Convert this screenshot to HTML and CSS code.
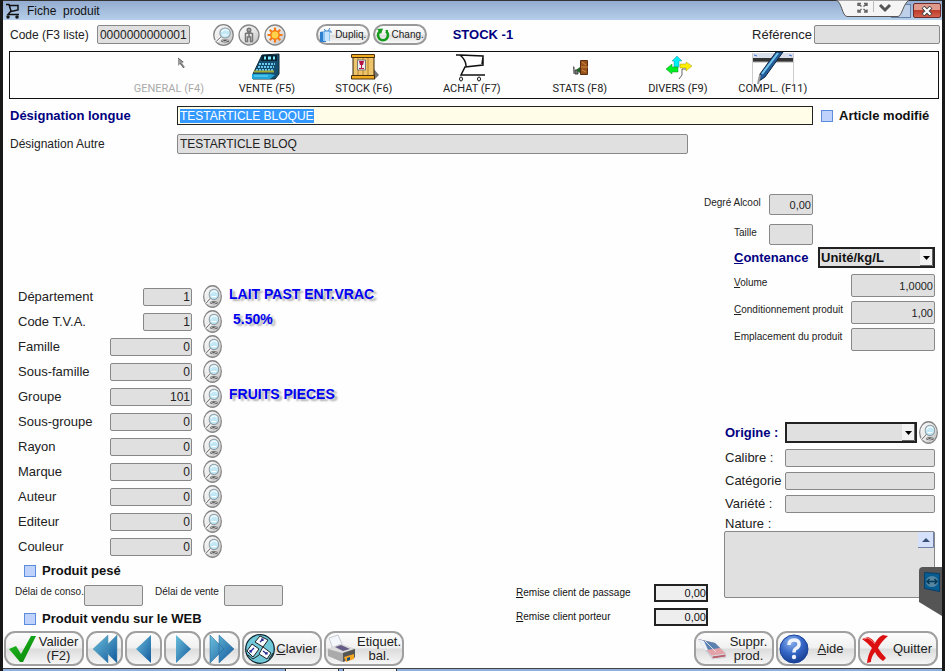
FILE: index.html
```
<!DOCTYPE html>
<html lang="fr">
<head>
<meta charset="utf-8">
<title>Fiche produit</title>
<link rel="stylesheet" href="styles.css">
</head>
<body>
<svg class="defs" aria-hidden="true">
  <defs>
    <linearGradient id="metal" x1="0" y1="0" x2="1" y2="1"><stop offset="0" stop-color="#fff"/><stop offset=".55" stop-color="#e3e3e3"/><stop offset="1" stop-color="#bbb"/></linearGradient>
    <linearGradient id="arrow" x1="0" y1="0" x2="1" y2="1"><stop offset="0" stop-color="#6cc0dc"/><stop offset="1" stop-color="#12589c"/></linearGradient>
    <radialGradient id="ball" cx=".4" cy=".25" r=".8"><stop offset="0" stop-color="#8db4ee"/><stop offset=".5" stop-color="#3768c8"/><stop offset="1" stop-color="#153a8c"/></radialGradient>
    <linearGradient id="tick" x1="0" y1="0" x2="1" y2="1"><stop offset="0" stop-color="#22c022"/><stop offset="1" stop-color="#068006"/></linearGradient>
    <symbol id="lens" viewBox="0 0 20 22" preserveAspectRatio="none">
      <ellipse cx="10" cy="11" rx="9.3" ry="10.3" fill="url(#metal)" stroke="#858585" stroke-width="1.3"/>
      <path d="M3 17.500L8 12.500" stroke="#fff" stroke-width="3"/><path d="M3 17.500L8 12.500" stroke="#777" stroke-width="1"/>
      <ellipse cx="11.500" cy="17" rx="4" ry="1.400" fill="#555"/><path d="M8 16l3 2 4-2" stroke="#bbb" fill="none"/>
      <circle cx="11.500" cy="9" r="5" fill="#c2e8f6" stroke="#8f9ca3"/>
      <path d="M8 8q3-4 7-1M9 11h5" stroke="#fff" fill="none"/>
    </symbol>
  </defs>
</svg>
<div class="window">
  <header class="titlebar">
    <svg width="16" height="16" viewBox="0 0 16 16" fill="none" stroke="#111" stroke-width="1.500"><path d="M1 1.500h3L6 8 3 11.500h11M4 2.500h9v4.500L6 8.500"/><circle cx="3" cy="14" r="1"/><circle cx="12" cy="14" r="1"/></svg>
    <h1>Fiche&nbsp; produit</h1>
    <button class="min" aria-label="Agrandir"></button>
    <button class="close" aria-label="Fermer"><svg width="12" height="10" viewBox="0 0 12 10"><path d="M2 1l8 8M10 1L2 9" stroke="#444" stroke-width="4"/><path d="M2.500 1.500l7 7M9.500 1.500l-7 7" stroke="#fff" stroke-width="2.200"/></svg></button>
  </header>

  <div class="remote-bar">
    <svg width="74" height="18" viewBox="0 0 74 18"><path d="M0 0C6 2 6 16 11 16.500H62C66 16 67 4 73 0Z" fill="#f5f5f5" stroke="#555"/>
      <path d="M37.500 0v12" stroke="#bbb"/><path d="M44 5l5 5 5-5" fill="none" stroke="#555" stroke-width="3"/>
      <g fill="none" stroke="#666" stroke-width="1.500"><path d="M22 6V3.500h3M28 3.500h3V6M31 9.500V12h-3M25 12h-3V9.500M22 3.500l3.500 3M31 3.500l-3.500 3M22 12l3.500-3M31 12l-3.500-3"/></g></svg>
  </div>

  <div class="code-row">
    <label for="code">Code (F3 liste)</label>
    <input id="code" class="field code" value="0000000000001">
    <div class="round-tools">
      <button aria-label="Rechercher"><svg width="21" height="22"><use href="#lens"/></svg></button>
      <button aria-label="Client"><svg width="22" height="22" viewBox="0 0 22 22"><circle cx="11" cy="11" r="10" fill="url(#metal)" stroke="#858585" stroke-width="1.300"/><g stroke="#777" fill="none" stroke-width="1.500"><circle cx="11" cy="6" r="1.800" fill="#aaa"/><path d="M7.500 17V9.500l3.500-1 3.500 1V17M11 9v4M9.500 18v-5h3v5M7 17.500h3M12 17.500h3"/></g></svg></button>
      <button aria-label="Options"><svg width="22" height="22" viewBox="0 0 22 22"><circle cx="11" cy="11" r="10" fill="url(#metal)" stroke="#858585" stroke-width="1.300"/><path d="M11 3.500v15M3.500 11h15M5.700 5.700l10.600 10.600M16.300 5.700L5.700 16.300" stroke="#f57a12" stroke-width="2.200"/><circle cx="11" cy="11" r="4.200" fill="#ffd24a" stroke="#f57a12" stroke-width="1.500"/></svg></button>
    </div>
    <div class="pills">
      <button class="pill"><svg width="14" height="14" viewBox="0 0 14 14"><path d="M1 4l6-1v11H1z" fill="#2f7fd0"/><path d="M4 3h7v10H4z" fill="#8cc4f2"/><path d="M6 3h4v10H6z" fill="#c7e4fb"/><path d="M5 1l2 2M11 0l-2 3M5 3h7v2" stroke="#3b88d4" fill="none"/></svg>Dupliq.</button>
      <button class="pill"><svg width="14" height="14" viewBox="0 0 14 14"><path d="M4 3.200A5 5 0 1 0 10 3.200" fill="none" stroke="#159c1c" stroke-width="2.600"/><path d="M1 1l6-.5-2 5.500z" fill="#159c1c"/><path d="M9 2l3 0v3z" fill="#159c1c"/></svg>Chang.</button>
    </div>
    <strong class="stock">STOCK -1</strong>
    <label for="ref" class="ref-label">Référence</label>
    <input id="ref" class="field ref">
  </div>

  <nav class="tabs">
    <button class="tab first" disabled><svg width="34" height="30" viewBox="0 0 34 30"><path d="M26 6l6 4-2 1 3 4-2 1-3-4-2 2z" fill="#999"/><path d="M26 6l5 4M28 11l4 5" stroke="#666"/></svg>GENERAL (F4)</button>
    <button class="tab"><svg width="34" height="30" viewBox="0 0 34 30"><path d="M12 3L29 2V22L25 27H3V22Z" fill="#164e70" stroke="#112b3a"/><path d="M12 3H27V9H11Z" fill="#082332"/><path d="M14 6h2m2 0h3m2 0h2" stroke="#7eeaff" stroke-width="3"/><path d="M9 12h16M8 15h16M6 18h17" stroke="#68c8f0" stroke-width="2" stroke-dasharray="2 1"/><path d="M4 19.500h20" stroke="#a4aa32" stroke-width="2"/><path d="M2 22h18l5 1-5 4H2z" fill="#21a4d7"/><path d="M4 24h14" stroke="#73dfff"/></svg>VENTE (F5)</button>
    <button class="tab"><svg width="34" height="30" viewBox="0 0 34 30"><path d="M26 16l6 7-5 5z" fill="#777"/><path d="M6 3h21v23H6z" fill="#edc46b" stroke="#332208"/><path d="M11 6v18M16 6v18M21 6v18" stroke="#b98228"/><path d="M4.500 2.500h23v3h-23zM4.500 23.500h23v3.500h-23z" fill="#f0aa20" stroke="#49300a"/><path d="M10.500 8h8v10h-8z" fill="#eee" stroke="#777"/><path d="M12 9h5l-1 4h-3zM14 13h1v3h2v1h-5v-1h2z" fill="#b61243"/></svg>STOCK (F6)</button>
    <button class="tab"><svg width="34" height="30" viewBox="0 0 34 30" fill="none" stroke="#111" stroke-width="1.500"><path d="M1 3h4l23 1v9l-18 2L6 23h24M5 3q6 5 6 11M28 5L27 12"/><ellipse cx="6" cy="27" rx="1.500" ry="2" stroke-width="1"/><ellipse cx="24" cy="27" rx="1.500" ry="2" stroke-width="1"/></svg>ACHAT (F7)</button>
    <button class="tab"><svg width="34" height="30" viewBox="0 0 34 30"><path d="M17.500 8.500h7v14h-7z" fill="#99541b" stroke="#5a2e10"/><path d="M18 15h7M19 10l4 3M19 18l4 2" stroke="#d08a3c"/><path d="M10 15h1v7M12 18h3v4h-3z" fill="#777" stroke="#444"/><path d="M13 18l4-3v6z" fill="#226326"/></svg>STATS (F8)</button>
    <button class="tab"><svg width="34" height="30" viewBox="0 0 34 30"><path d="M16 4l5 5h-3v6h-5V9h-2z" fill="#00eff5" stroke="#278c9a" stroke-width=".5"/><path d="M5 17l6-5v3h6v5h-6v2z" fill="#00ef22" stroke="#178827" stroke-width=".5"/><path d="M31 14l-6-4v2h-6v4h6v3z" fill="#ffef00" stroke="#a0941c" stroke-width=".5"/><path d="M21 17h4M21 17v6l-3 4" stroke="#666" fill="none"/></svg>DIVERS (F9)</button>
    <button class="tab wide"><svg width="42" height="40" viewBox="0 0 42 40"><path d="M.5 1v31M41.500 1v31" stroke="#ccc"/><path d="M1 1h40v5H1z" fill="#d9dfeb"/><path d="M1 6h40v4H1z" fill="#333"/><path d="M1 10h40" stroke="#aaa"/><path d="M2 3l3 1M37 3l3 1" stroke="#4475d0"/><path d="M24 0L8 22l-1 7 6-4L31 0z" fill="#235c98" stroke="#10253b"/><path d="M26 1L10 22" stroke="#75c6ef" stroke-width="2"/><path d="M8 23l-2 9" stroke="#999" stroke-width="2"/></svg>COMPL. (F11)</button>
  </nav>

  <div class="names">
    <label for="long" class="strong navy">Désignation longue</label>
    <input id="long" class="field long" value="TESTARTICLE BLOQUE">
    <label class="check"><input type="checkbox">Article modifié</label>
    <label for="other">Désignation Autre</label>
    <input id="other" class="field other" value="TESTARTICLE BLOQ">
  </div>

  <main class="body">
    <section class="left">
      <div class="class-row"><label for="f1">Département</label><input id="f1" class="field short" value="1"><button aria-label="Rechercher département"><svg><use href="#lens"/></svg></button><output>LAIT PAST ENT.VRAC</output></div>
      <div class="class-row"><label for="f2">Code T.V.A.</label><input id="f2" class="field short" value="1"><button aria-label="Rechercher TVA"><svg><use href="#lens"/></svg></button><output class="rate">5.50%</output></div>
      <div class="class-row"><label for="f3">Famille</label><input id="f3" class="field" value="0"><button aria-label="Rechercher famille"><svg><use href="#lens"/></svg></button></div>
      <div class="class-row"><label for="f4">Sous-famille</label><input id="f4" class="field" value="0"><button aria-label="Rechercher sous-famille"><svg><use href="#lens"/></svg></button></div>
      <div class="class-row"><label for="f5">Groupe</label><input id="f5" class="field" value="101"><button aria-label="Rechercher groupe"><svg><use href="#lens"/></svg></button><output>FRUITS PIECES</output></div>
      <div class="class-row"><label for="f6">Sous-groupe</label><input id="f6" class="field" value="0"><button aria-label="Rechercher sous-groupe"><svg><use href="#lens"/></svg></button></div>
      <div class="class-row"><label for="f7">Rayon</label><input id="f7" class="field" value="0"><button aria-label="Rechercher rayon"><svg><use href="#lens"/></svg></button></div>
      <div class="class-row"><label for="f8">Marque</label><input id="f8" class="field" value="0"><button aria-label="Rechercher marque"><svg><use href="#lens"/></svg></button></div>
      <div class="class-row"><label for="f9">Auteur</label><input id="f9" class="field" value="0"><button aria-label="Rechercher auteur"><svg><use href="#lens"/></svg></button></div>
      <div class="class-row"><label for="f10">Editeur</label><input id="f10" class="field" value="0"><button aria-label="Rechercher éditeur"><svg><use href="#lens"/></svg></button></div>
      <div class="class-row"><label for="f11">Couleur</label><input id="f11" class="field" value="0"><button aria-label="Rechercher couleur"><svg><use href="#lens"/></svg></button></div>
      <div class="extras">
        <label class="check indent"><input type="checkbox">Produit pesé</label>
        <div class="delays">
          <label for="conso">Délai de conso.</label><input id="conso" class="field">
          <label for="vente">Délai de vente</label><input id="vente" class="field">
        </div>
        <label class="check indent"><input type="checkbox">Produit vendu sur le WEB</label>
      </div>
    </section>

    <section class="discounts">
      <label for="r1"><u>R</u>emise client de passage</label><input id="r1" value="0,00">
      <label for="r2"><u>R</u>emise client porteur</label><input id="r2" value="0,00">
    </section>

    <section class="right">
      <div class="sizes">
        <label for="deg">Degré Alcool</label><input id="deg" class="field" value="0,00">
        <label for="taille" class="inset">Taille</label><input id="taille" class="field">
      </div>
      <div class="content-row">
        <label for="cont" class="strong navy"><u>C</u>ontenance</label>
        <span class="drop"><select id="cont"><option>Unité/kg/L</option></select><svg width="13" height="17" viewBox="0 0 13 17"><path d="M0 0h13v17H0z" fill="#f2f2f2"/><path d="M12.500 0v16.500H0" fill="none" stroke="#666"/><path d="M3 7h7L6.500 11z" fill="#000"/></svg></span>
      </div>
      <div class="packing">
        <label for="vol"><u>V</u>olume</label><input id="vol" class="field" value="1,0000">
        <label for="pack"><u>C</u>onditionnement produit</label><input id="pack" class="field" value="1,00">
        <label for="place">Emplacement du produit</label><input id="place" class="field">
      </div>
      <div class="origin">
        <label for="orig" class="strong navy">Origine :</label>
        <div class="origin-pick"><span class="drop"><select id="orig"><option></option></select><svg width="13" height="17" viewBox="0 0 13 17"><path d="M0 0h13v17H0z" fill="#f2f2f2"/><path d="M12.500 0v16.500H0" fill="none" stroke="#666"/><path d="M3 7h7L6.500 11z" fill="#000"/></svg></span>
          <button aria-label="Rechercher origine"><svg width="19" height="23"><use href="#lens"/></svg></button></div>
        <label for="cal">Calibre :</label><input id="cal" class="field">
        <label for="cat">Catégorie</label><input id="cat" class="field">
        <label for="var">Variété :</label><input id="var" class="field">
      </div>
      <label for="nat" class="nature-label">Nature :</label>
      <div class="nature"><textarea id="nat" class="field"></textarea>
        <svg class="scroll-up" width="16" height="16" viewBox="0 0 16 16"><path d="M0 0h16v16H0z" fill="#d5e0fa"/><path d="M15.500 0v15.500H0" fill="none" stroke="#6f83a8"/><path d="M4 10h8L8 6z" fill="#384f78"/></svg>
        <svg class="remote-tab" width="23" height="49" viewBox="0 0 23 49"><path d="M23 0H4Q0 0 0 4V35L23 49z" fill="#555"/><path d="M5.500 5.500l15 1v18l-15-3z" fill="#075d91" stroke="#0a3e66"/><ellipse cx="13" cy="14.500" rx="6" ry="5.500" fill="#5486a2"/><path d="M8 14.500h10M10.500 12L8 14.500l2.500 2.500M15.500 12l2.500 2.500-2.500 2.500" stroke="#073956" stroke-width="1.500" fill="none"/></svg>
      </div>
    </section>
  </main>

  <footer class="actions">
    <button class="act"><svg width="30" height="30" viewBox="0 0 30 30"><path d="M2 15l7-3 5 8L24 2l5 0L16 28l-3 0z" fill="url(#tick)"/></svg><span>Valider<br>(F2)</span></button>
    <button class="act step" aria-label="Premier"><svg width="26" height="30" viewBox="0 0 26 30"><path d="M16 1v28L1 15zM25 1v28L11 15z" fill="url(#arrow)" stroke="#4f93ad" stroke-width=".5"/></svg></button>
    <button class="act step" aria-label="Précédent"><svg width="26" height="30" viewBox="0 0 26 30"><path d="M20 1v28L5 15z" fill="url(#arrow)"/></svg></button>
    <button class="act step" aria-label="Suivant"><svg width="26" height="30" viewBox="0 0 26 30"><path d="M6 1v28L21 15z" fill="url(#arrow)"/></svg></button>
    <button class="act step" aria-label="Dernier"><svg width="26" height="30" viewBox="0 0 26 30"><path d="M1 1v28L15 15zM10 1v28L25 15z" fill="url(#arrow)" stroke="#1d6299" stroke-width=".5"/></svg></button>
    <button class="act"><svg width="30" height="30" viewBox="0 0 30 30"><circle cx="15" cy="15" r="14.300" fill="#70c8d8" stroke="#102a35" stroke-width="1.300"/><g fill="#f7faff" stroke="#222"><path d="M15 2l8 4-5 7-8-5zM7 10l7 5-6 8-6-6zM18 13l8 6-4 6-8-5z"/></g><g stroke="#262695" stroke-width="1.200" fill="none"><path d="M15 8l3-3m-2 0h2v2M9 14l-4 4m0-2v2h2M18 17l4 3m-2 0h2v-2"/></g><path d="M3 21l5 4 6-4M24 25l4-6" stroke="#222" fill="none"/></svg><span><u>C</u>lavier</span></button>
    <button class="act"><svg width="30" height="30" viewBox="0 0 30 30"><path d="M2 4l9-3 5 11-10 3z" fill="#f4f8fc" stroke="#c5cbd3"/><path d="M1 15l12-5 15 5v9l-13 4L1 22z" fill="#aaa"/><path d="M1 15l12-5 15 5-13 4z" fill="#ddd"/><path d="M8 13l6-2 9 4-7 2z" fill="#655c85"/><path d="M16 19l12-4v8l-12 5z" fill="#555"/><path d="M17 23l10-3v5l-8 3z" fill="#f5a623"/><path d="M20 24l3-1v3l-3 1z" fill="#1a4d80"/></svg><span>Etiquet.<br>bal.</span></button>
    <button class="act push"><svg width="30" height="30" viewBox="0 0 30 30"><path d="M1 5l7 11 7 9 14-1v-5L18 9z" fill="#c9cdd3"/><path d="M1 5l17 4 11 11-14 2-7-8z" fill="#e3a2a8"/><path d="M1 5l17 4 5 5-14 2z" fill="#5b82b0"/><path d="M1 5l6 2 4 9-3 0z" fill="#edf1f5"/><path d="M8 7l11 11M15 22l14-2v3l-14 2z" stroke="#d8dde4" fill="#b9626e"/></svg><span>Suppr.<br>prod.</span></button>
    <button class="act"><svg width="30" height="30" viewBox="0 0 30 30"><circle cx="15" cy="15" r="14" fill="url(#ball)" stroke="#19429a"/><path d="M10 11q0-5 5-5t5 4q0 3-3 4.500-2 1-2 4" fill="none" stroke="#eef3fc" stroke-width="3.500"/><circle cx="15" cy="23" r="2.200" fill="#eef3fc"/></svg><span><u>A</u>ide</span></button>
    <button class="act"><svg width="30" height="30" viewBox="0 0 30 30"><path d="M1 5l6-2q5 2 7 6 4-7 8-8l5 1q-7 6-10 12 3 5 8 10l-3 3q-5-3-8-9-4 5-4 10l-4 1q1-9 5-15Q7 9 1 5z" fill="#dc1010"/><path d="M3 5l4-1q5 3 7 6" stroke="#f78080" fill="none"/></svg><span>Quitter</span></button>
  </footer>
  <div class="taskbar"><i></i><i></i></div>
</div>
<script>
  document.getElementById('long').focus();
  document.getElementById('long').select();
</script>
</body>
</html>
```
FILE: styles.css
```
* { box-sizing: border-box; }
body { margin: 0; background: #fefefe; font: 12px/14px "Liberation Sans", Arial, sans-serif; color: #222; }
button, input, select, textarea { font: inherit; color: inherit; margin: 0; padding: 0; }
button { background: none; border: 0; }
svg { display: block; flex: none; }
.defs { position: absolute; width: 0; height: 0; }
.window { position: relative; display: flex; flex-direction: column; min-height: 100vh; border: solid #181818; border-width: 0 3px; }

.titlebar { display: flex; align-items: center; height: 20px; padding: 0 1px 0 2px; gap: 6px; border-top: 1px solid #333; background: linear-gradient(#93acd0, #b5cee9); }
.titlebar h1 { flex: 1; margin: 0; font-size: 12px; font-weight: normal; color: #111; }
.titlebar .close { display: grid; place-items: center; width: 28px; height: 15px; border: 1px solid #6b2a2a; border-radius: 2px; background: linear-gradient(#e09a8c 45%, #bd3c2a 50%, #d4604c); }
.titlebar .min { width: 20px; height: 14px; margin-right: -4px; border: 1px solid #6680a5; background: #bdd0e8; }
.remote-bar { position: absolute; top: 0; right: 32px; }

.code-row { display: flex; align-items: center; height: 31px; padding: 0 2px 2px 7px; }
.field { height: 19px; min-width: 0; border: 1px solid #888; border-radius: 2px; background: #e0e0e0; padding: 0 2px; outline: 0; }
.code { width: 93px; margin-left: 8px; text-align: right; }
.round-tools { display: flex; gap: 4px; margin-left: 23px; }
.pills { display: flex; gap: 3px; margin-left: 30px; }
.pill { display: flex; align-items: center; justify-content: center; gap: 2px; width: 54px; height: 21px; border: 2px solid #999; border-radius: 11px; background: linear-gradient(#fff, #eee 50%, #ddd 55%, #f8f8f8); font-size: 10px; }
.stock { margin-left: 26px; font-size: 13px; color: #000080; }
.ref-label { margin-left: auto; font-size: 13px; }
.ref { width: 126px; margin-left: 2px; }

.tabs { display: grid; grid-template-columns: 98fr 98fr 96fr 120fr 96fr 100fr 90fr; height: 48px; margin: 0 3px 0 6px; padding: 0 12.8% 0 11.7%; border: 1px solid #111; }
.tab { display: flex; flex-direction: column; align-items: center; white-space: nowrap; font: 11px/14px Roboto, "Liberation Sans", sans-serif; color: #222; }
.tab:disabled { color: #aaa; }
.wide svg { margin-bottom: -10px; }

.names { display: grid; grid-template-columns: 167px 1fr 125px 129px; align-items: center; row-gap: 9px; padding: 7px 0 0 7px; }
.strong { font-size: 13px; font-weight: bold; }
.navy { color: #000080; }
.long { grid-column: 2 / 4; background: #fffde8; border-color: #222; border-radius: 0; }
.names .check { padding-left: 8px; }
.long::selection { background: #3399ff; color: #fff; }
.other { height: 20px; }
.check { display: flex; align-items: center; gap: 6px; font-size: 13px; font-weight: bold; color: #111; white-space: nowrap; }
.check input { appearance: none; width: 12px; height: 12px; border: 1px solid #5c8cdc; background: #bfd2fc; }

.body { flex: 1; display: grid; grid-template-columns: 1fr 192px 211px; column-gap: 16px; align-items: end; padding: 40px 7px 0 8px; }
.left { display: flex; flex-direction: column; }
.class-row { display: grid; grid-template-columns: 92px 82px 19px auto; align-items: center; height: 25px; padding-left: 7px; }
.class-row label { font-size: 13px; }
.class-row .field { justify-self: end; width: 82px; height: 18px; text-align: right; padding: 0 1px; }
.class-row .short { width: 49px; }
.class-row button { margin-left: 11px; }
.class-row svg { width: 19px; height: 23px; }
.class-row output { margin: 0 0 6px 18px; font-size: 14px; font-weight: bold; color: #0000f0; text-shadow: 3px 2px 2px #aaa; white-space: nowrap; }
.class-row .rate { margin-left: 22px; }
.extras { padding-top: 2px; }
.indent { height: 20px; padding-left: 13px; }
.delays, .discounts label, .sizes, .packing { font-size: 10px; white-space: nowrap; }
.delays { display: flex; padding: 4px 0 3px 4px; }
.delays .field { width: 59px; height: 21px; margin: 0 12px 0 0; }
.delays .field:last-child { margin-left: 5px; }

.discounts { display: grid; grid-template-columns: 1fr 54px; align-items: center; row-gap: 6px; padding-bottom: 3px; color: #111; }
.discounts input { width: 54px; height: 18px; border: 2px solid #222; background: #eee; font-size: 11px; text-align: right; }

.right { display: flex; flex-direction: column; align-self: start; padding-bottom: 30px; }
.sizes { display: grid; grid-template-columns: 65px 44px; row-gap: 9px; margin-left: -20px; }
.sizes label { padding-top: 2px; }
.sizes .field { height: 21px; font-size: 11px; text-align: right; padding: 0 1px; }
.sizes .inset { padding-left: 30px; }
.content-row { display: grid; grid-template-columns: 84px 1fr; align-items: center; margin: 2px 0 0 10px; }
.drop { position: relative; display: block; }
.drop select { display: block; width: 100%; height: 21px; appearance: none; border: 2px solid #222; border-radius: 0; background: #e0e0e0; padding: 0 1px; font-size: 13px; font-weight: bold; color: #111; }
.drop svg { position: absolute; top: 2px; right: 2px; }
.packing { display: grid; grid-template-columns: 1fr 84px; row-gap: 4px; margin: 6px 0 0 10px; }
.packing label { padding-top: 2px; }
.packing .field { height: 23px; font-size: 11px; text-align: right; padding: 0 1px; }
.origin { display: grid; grid-template-columns: 60px 1fr; align-items: center; row-gap: 5px; margin: 70px 0 0 1px; font-size: 13px; }
.origin .field { height: 18px; }
.origin-pick { display: flex; align-items: center; gap: 2px; margin-right: -3px; }
.origin-pick .drop { flex: 1; }
.nature-label { margin: 4px 0 0 1px; font-size: 13px; }
.nature { position: relative; }
.nature textarea { display: block; width: 100%; height: 67px; resize: none; }
.scroll-up { position: absolute; top: 1px; right: 1px; }
.remote-tab { position: absolute; top: 36px; right: -7px; }

.actions { display: flex; gap: 2px; padding: 2px 4px 2px 1px; }
.act { display: flex; align-items: center; width: 80px; height: 35px; padding: 0 2px 0 1px; border: 2px solid #a0a0a0; border-radius: 11px; background: linear-gradient(#fdfdfd, #f0f0f0 48%, #dcdcdc 52%, #f6f6f6); font-size: 13px; line-height: 14px; white-space: nowrap; }
.act span { flex: 1; text-align: center; }
.step { width: 37px; justify-content: center; padding: 0; }
.push { margin-left: auto; }
.taskbar { display: flex; gap: 4px; height: 3px; padding-left: 282px; border-top: 1px solid #444; background: #8fb0dc; }
.taskbar i { width: 54px; background: #f4f4f4; border: solid #333; border-width: 0 1px; }
```
